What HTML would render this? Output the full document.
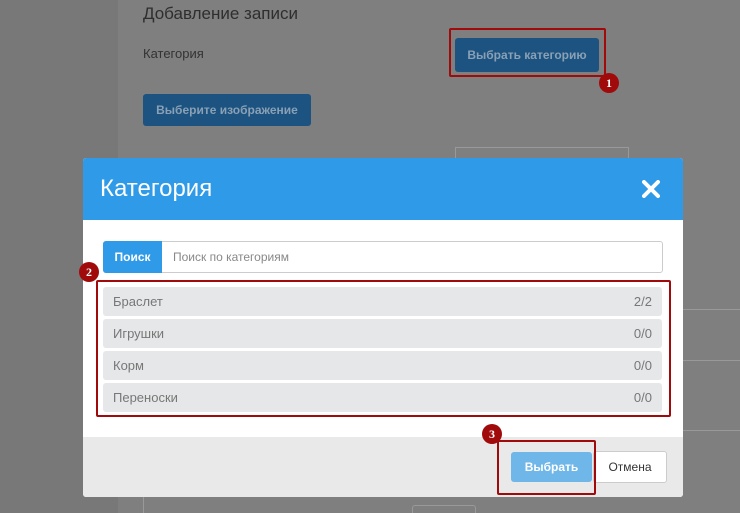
<!DOCTYPE html>
<html><head><meta charset="utf-8"><style>
html,body{margin:0;width:740px;height:513px;overflow:hidden}
body{background:#7f7f7f;font-family:"Liberation Sans","DejaVu Sans",sans-serif;position:relative}
.a{position:absolute}
.badge{position:absolute;width:20px;height:20px;border-radius:50%;background:#a00a0a;color:#fff;font-weight:bold;font-size:12px;text-align:center;line-height:20px;font-family:"Liberation Serif",serif}
.row{position:absolute;left:103px;width:559px;height:29px;background:#e6e7e8;border-radius:3px;font-size:13px;color:#777;line-height:29px}
.row span{position:absolute;left:10px}.row b{position:absolute;right:10px;font-weight:normal}
</style></head><body>
<div class="a" style="left:0;top:0;width:118px;height:513px;background:#787878"></div>
<div class="a" style="left:143px;top:4px;font-size:17px;color:#2e2e2e">Добавление записи</div>
<div class="a" style="left:143px;top:46px;font-size:13px;color:#333">Категория</div>
<div class="a" style="left:455px;top:38px;width:144px;height:34px;background:#1c5380;border-radius:3px;color:#8aa0b5;font-size:12px;font-weight:bold;text-align:center;line-height:34px">Выбрать категорию</div>
<div class="a" style="left:449px;top:28px;width:153px;height:45px;border:2px solid #a00a0a;border-radius:2px"></div>
<div class="badge" style="left:599px;top:73px">1</div>
<div class="a" style="left:143px;top:94px;width:168px;height:32px;background:#1c5380;border-radius:3px;color:#8aa0b5;font-size:12px;font-weight:bold;text-align:center;line-height:32px">Выберите изображение</div>
<div class="a" style="left:455px;top:147px;width:172px;height:20px;border:1px solid #999"></div>
<div class="a" style="left:683px;top:309px;width:57px;height:1px;background:#999"></div>
<div class="a" style="left:683px;top:360px;width:57px;height:1px;background:#999"></div>
<div class="a" style="left:683px;top:430px;width:57px;height:1px;background:#999"></div>
<div class="a" style="left:143px;top:497px;width:1px;height:16px;background:#999"></div>
<div class="a" style="left:412px;top:505px;width:62px;height:10px;border:1px solid #999;border-radius:3px"></div>

<div class="a" style="left:83px;top:158px;width:600px;height:339px;background:#fff;border-radius:3px;overflow:hidden">
 <div class="a" style="left:0;top:0;width:600px;height:62px;background:#2f9be8"></div>
 <div class="a" style="left:17px;top:17px;font-size:24px;color:#fff">Категория</div>
 <svg class="a" style="left:559px;top:22px" width="18" height="18" viewBox="0 0 18 18"><path d="M2 2L16 16M16 2L2 16" stroke="#fff" stroke-width="4" stroke-linecap="round"/></svg>
 <div class="a" style="left:0;top:279px;width:600px;height:60px;background:#e9e9ea"></div>
</div>
<div class="a" style="left:103px;top:241px;width:558px;height:30px;border:1px solid #ccc;border-radius:3px;background:#fff"></div>
<div class="a" style="left:103px;top:241px;width:59px;height:32px;background:#2f9be8;border-radius:3px 0 0 3px;color:#fff;font-size:12px;font-weight:bold;text-align:center;line-height:32px">Поиск</div>
<div class="a" style="left:173px;top:250px;font-size:12px;color:#888">Поиск по категориям</div>
<div class="row" style="top:287px"><span>Браслет</span><b>2/2</b></div>
<div class="row" style="top:319px"><span>Игрушки</span><b>0/0</b></div>
<div class="row" style="top:351px"><span>Корм</span><b>0/0</b></div>
<div class="row" style="top:383px"><span>Переноски</span><b>0/0</b></div>
<div class="a" style="left:96px;top:280px;width:571px;height:133px;border:2px solid #a00a0a;border-radius:2px"></div>
<div class="badge" style="left:79px;top:262px">2</div>
<div class="a" style="left:511px;top:452px;width:81px;height:30px;background:#6fb6e9;border-radius:3px;color:#fff;font-size:12px;font-weight:bold;text-align:center;line-height:30px">Выбрать</div>
<div class="a" style="left:593px;top:451px;width:72px;height:30px;background:#fff;border:1px solid #ccc;border-radius:3px;color:#333;font-size:12px;text-align:center;line-height:30px">Отмена</div>
<div class="a" style="left:497px;top:440px;width:95px;height:51px;border:2px solid #a00a0a;border-radius:2px"></div>
<div class="badge" style="left:482px;top:424px">3</div>
</body></html>
